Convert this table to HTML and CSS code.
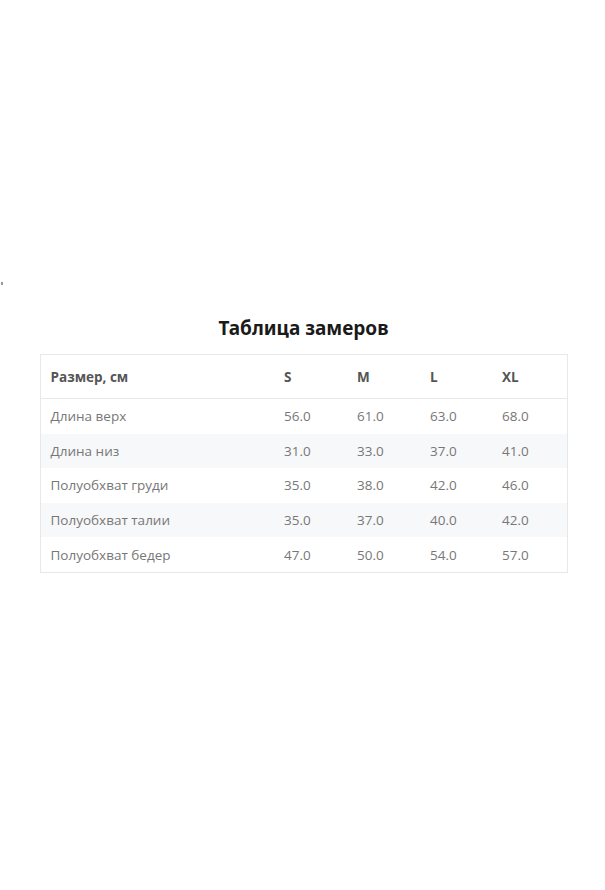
FILE: index.html
```
<!DOCTYPE html>
<html lang="ru">
<head>
<meta charset="utf-8">
<title>Таблица замеров</title>
<link rel="stylesheet" href="styles.css">
</head>
<body>
<span class="dot"></span>
<main class="page">
  <h2 class="title">Таблица замеров</h2>
  <table class="sizes">
    <colgroup>
      <col class="c-name"><col class="c-s"><col class="c-m"><col class="c-l"><col class="c-xl">
    </colgroup>
    <thead>
      <tr><th>Размер, см</th><th>S</th><th>M</th><th>L</th><th>XL</th></tr>
    </thead>
    <tbody>
      <tr><td>Длина верх</td><td>56.0</td><td>61.0</td><td>63.0</td><td>68.0</td></tr>
      <tr><td>Длина низ</td><td>31.0</td><td>33.0</td><td>37.0</td><td>41.0</td></tr>
      <tr><td>Полуобхват груди</td><td>35.0</td><td>38.0</td><td>42.0</td><td>46.0</td></tr>
      <tr><td>Полуобхват талии</td><td>35.0</td><td>37.0</td><td>40.0</td><td>42.0</td></tr>
      <tr><td>Полуобхват бедер</td><td>47.0</td><td>50.0</td><td>54.0</td><td>57.0</td></tr>
    </tbody>
  </table>
</main>
</body>
</html>
```
FILE: styles.css
```
html, body {
  margin: 0;
  padding: 0;
  background: #fff;
}
body {
  font-family: "Open Sans", "Noto Sans", sans-serif;
  color: #777;
}
.dot {
  position: absolute;
  left: 1px;
  top: 282px;
  width: 2px;
  height: 3px;
  background: #999;
}
.page {
  display: flex;
  flex-direction: column;
  align-items: center;
  padding: 315px 0 0 2px;
}
.title {
  margin: 0 0 13px;
  font-family: "Noto Sans", "Open Sans", sans-serif;
  font-size: 19px;
  font-weight: 700;
  color: #1a1a1a;
  line-height: 26px;
}
.sizes {
  width: 527px;
  border-collapse: collapse;
  border: 1px solid #e8e8e8;
  font-size: 13.5px;
  table-layout: fixed;
}
.c-name { width: 234px; }
.c-s { width: 73px; }
.c-m { width: 73px; }
.c-l { width: 72px; }
.c-xl { width: 75px; }
.sizes th, .sizes td {
  text-align: left;
  padding: 0 0 0 10px;
}
.sizes th {
  height: 43px;
  font-weight: 700;
  color: #555;
  border-bottom: 1px solid #e8e8e8;
}
.sizes td {
  height: 34.6px;
  color: #777;
}
.sizes tbody tr:nth-child(even) td {
  background: #f7f8fa;
}
```
